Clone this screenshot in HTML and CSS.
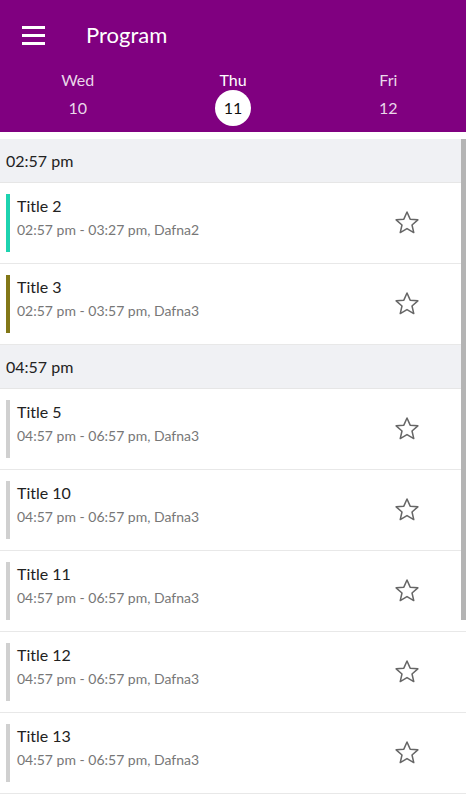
FILE: index.html
```html
<!DOCTYPE html>
<html lang="en">
<head>
    <meta charset="UTF-8">
    <meta name="viewport" content="width=device-width, initial-scale=1.0">
    <title>Program</title>
    <link rel="stylesheet" href="styles.css">
</head>
<body>
    <div class="header">
        <div class="toolbar">
            <div class="menu">
                <span></span><span></span><span></span>
            </div>
            <h1>Program</h1>
        </div>
        <div class="days">
            <div class="day"><div class="name">Wed</div><div class="num">10</div></div>
            <div class="day active"><div class="name">Thu</div><div class="num">11</div></div>
            <div class="day"><div class="name">Fri</div><div class="num">12</div></div>
        </div>
    </div>

    <div class="list">
        <div class="scrollbar"></div>

        <div class="section">02:57 pm</div>
        <div class="item">
            <div class="bar" style="background:#1dd3b0"></div>
            <div class="info">
                <div class="title">Title 2</div>
                <div class="sub">02:57 pm - 03:27 pm, Dafna2</div>
            </div>
            <svg class="star" viewBox="0 0 24 24"><path d="M12 2.6l2.7 6.1 6.6.6-5 4.4 1.5 6.5L12 16.8l-5.8 3.4 1.5-6.5-5-4.4 6.6-.6z"/></svg>
        </div>
        <div class="item">
            <div class="bar" style="background:#827717"></div>
            <div class="info">
                <div class="title">Title 3</div>
                <div class="sub">02:57 pm - 03:57 pm, Dafna3</div>
            </div>
            <svg class="star" viewBox="0 0 24 24"><path d="M12 2.6l2.7 6.1 6.6.6-5 4.4 1.5 6.5L12 16.8l-5.8 3.4 1.5-6.5-5-4.4 6.6-.6z"/></svg>
        </div>

        <div class="section">04:57 pm</div>
        <div class="item">
            <div class="bar"></div>
            <div class="info">
                <div class="title">Title 5</div>
                <div class="sub">04:57 pm - 06:57 pm, Dafna3</div>
            </div>
            <svg class="star" viewBox="0 0 24 24"><path d="M12 2.6l2.7 6.1 6.6.6-5 4.4 1.5 6.5L12 16.8l-5.8 3.4 1.5-6.5-5-4.4 6.6-.6z"/></svg>
        </div>
        <div class="item">
            <div class="bar"></div>
            <div class="info">
                <div class="title">Title 10</div>
                <div class="sub">04:57 pm - 06:57 pm, Dafna3</div>
            </div>
            <svg class="star" viewBox="0 0 24 24"><path d="M12 2.6l2.7 6.1 6.6.6-5 4.4 1.5 6.5L12 16.8l-5.8 3.4 1.5-6.5-5-4.4 6.6-.6z"/></svg>
        </div>
        <div class="item">
            <div class="bar"></div>
            <div class="info">
                <div class="title">Title 11</div>
                <div class="sub">04:57 pm - 06:57 pm, Dafna3</div>
            </div>
            <svg class="star" viewBox="0 0 24 24"><path d="M12 2.6l2.7 6.1 6.6.6-5 4.4 1.5 6.5L12 16.8l-5.8 3.4 1.5-6.5-5-4.4 6.6-.6z"/></svg>
        </div>
        <div class="item">
            <div class="bar"></div>
            <div class="info">
                <div class="title">Title 12</div>
                <div class="sub">04:57 pm - 06:57 pm, Dafna3</div>
            </div>
            <svg class="star" viewBox="0 0 24 24"><path d="M12 2.6l2.7 6.1 6.6.6-5 4.4 1.5 6.5L12 16.8l-5.8 3.4 1.5-6.5-5-4.4 6.6-.6z"/></svg>
        </div>
        <div class="item">
            <div class="bar"></div>
            <div class="info">
                <div class="title">Title 13</div>
                <div class="sub">04:57 pm - 06:57 pm, Dafna3</div>
            </div>
            <svg class="star" viewBox="0 0 24 24"><path d="M12 2.6l2.7 6.1 6.6.6-5 4.4 1.5 6.5L12 16.8l-5.8 3.4 1.5-6.5-5-4.4 6.6-.6z"/></svg>
        </div>
    </div>
</body>
</html>
```

FILE: styles.css
```css
body {
    margin: 0;
    padding: 0;
    font-family: Lato, "Open Sans", sans-serif;
    background: white;
    overflow: hidden;
}
.header {
    background: #800080;
    color: white;
    height: 132px;
}
.toolbar {
    display: flex;
    align-items: center;
    height: 70px;
}
.menu {
    display: flex;
    flex-direction: column;
    gap: 5px;
    width: 23px;
    margin-left: 22px;
}
.menu span {
    display: block;
    height: 3px;
    background: white;
}
.toolbar h1 {
    margin: 0 0 2px 41px;
    font-size: 22px;
    font-weight: normal;
}
.days {
    display: flex;
}
.day {
    flex: 1;
    display: flex;
    flex-direction: column;
    align-items: center;
    color: rgba(255, 255, 255, 0.85);
}
.day.active {
    color: white;
}
.day .name {
    font-size: 16px;
    height: 20px;
    line-height: 20px;
}
.day .num {
    font-size: 16px;
    width: 36px;
    height: 36px;
    line-height: 36px;
    text-align: center;
    border-radius: 50%;
}
.day.active .num {
    background: white;
    color: #111;
}
.list {
    position: relative;
    margin-top: 7px;
}
.scrollbar {
    position: absolute;
    right: 0;
    top: 0;
    width: 5px;
    height: 481px;
    background: #b4b4b4;
}
.section {
    background: #f0f1f4;
    height: 43px;
    line-height: 43px;
    padding-left: 6px;
    font-size: 16px;
    color: #222;
    border-bottom: 1px solid #e6e6e6;
}
.item {
    display: flex;
    align-items: center;
    height: 80px;
    border-bottom: 1px solid #e8e8e8;
}
.bar {
    width: 4px;
    height: 58px;
    margin-left: 6px;
    background: #d0d0d0;
}
.info {
    flex: 1;
    padding-left: 7px;
    margin-top: -12px;
}
.title {
    font-size: 16px;
    color: #222;
}
.sub {
    font-size: 14px;
    color: #777;
    margin-top: 6px;
}
.star {
    width: 28px;
    height: 28px;
    margin-right: 45px;
    fill: none;
    stroke: #666;
    stroke-width: 1.3;
    stroke-linejoin: round;
}
```
